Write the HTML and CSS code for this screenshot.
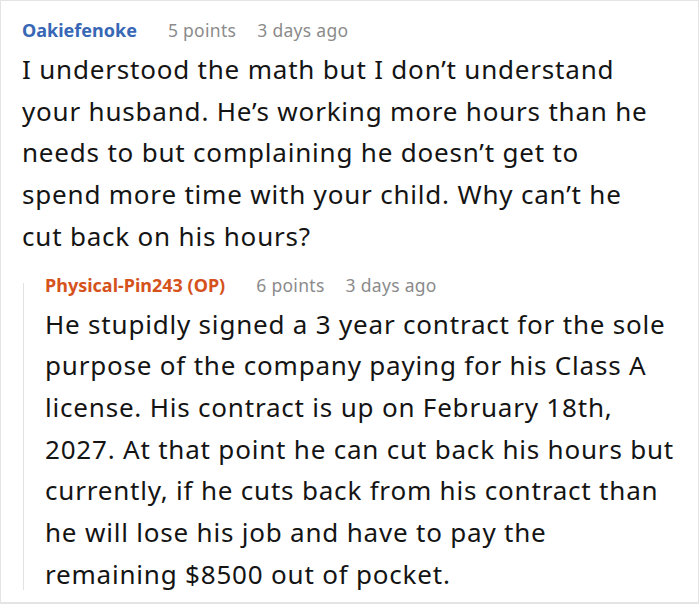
FILE: index.html
```html
<!DOCTYPE html>
<html>
<head>
<meta charset="utf-8">
<link rel="stylesheet" href="styles.css">
</head>
<body>
<div class="frame">
  <div class="comment">
    <div class="meta">
      <span class="author">Oakiefenoke</span>
      <span class="info">5 points</span>
      <span class="info">3 days ago</span>
    </div>
    <p class="body">I understood the math but I don’t understand<br>your husband. He’s working more hours than he<br>needs to but complaining he doesn’t get to<br>spend more time with your child. Why can’t he<br>cut back on his hours?</p>
    <div class="reply">
      <div class="meta">
        <span class="author op">Physical-Pin243 (OP)</span>
        <span class="info">6 points</span>
        <span class="info">3 days ago</span>
      </div>
      <p class="body">He stupidly signed a 3 year contract for the sole purpose of the company paying for his Class A license. His contract is up on February 18th, 2027. At that point he can cut back his hours but currently, if he cuts back from his contract than he will lose his job and have to pay the remaining $8500 out of pocket.</p>
    </div>
  </div>
</div>
</body>
</html>
```
FILE: styles.css
```css
html, body {
  margin: 0;
  padding: 0;
  background: #fff;
}
.frame {
  width: 699px;
  height: 604px;
  box-sizing: border-box;
  border: 1px solid #e4e4e4;
  border-bottom-width: 2px;
  overflow: hidden;
  font-family: "Noto Sans", "Open Sans", sans-serif;
}
.comment {
  padding: 17px 0 0 21px;
}
.meta {
  display: flex;
  align-items: baseline;
  gap: 21px;
  font-size: 18px;
  line-height: 24px;
}
.author {
  font-weight: bold;
  color: #3767b5;
  margin-right: 10px;
}
.author.op {
  color: #d5521c;
}
.info {
  color: #8b8b8b;
  font-size: 17.5px;
  letter-spacing: 0.3px;
}
.body {
  margin: 7px 0 0 0;
  font-size: 26px;
  line-height: 41.7px;
  color: #141414;
  letter-spacing: 0.8px;
  width: 660px;
  white-space: nowrap;
}
.reply {
  display: flex;
  flex-direction: column;
  margin: 25px 0 0 1px;
  border-left: 1px solid #e2e2e2;
  padding-left: 21px;
}
.reply .meta {
  margin-top: -10px;
}
.reply .body {
  width: 640px;
  margin-bottom: -5px;
  white-space: normal;
}
```
